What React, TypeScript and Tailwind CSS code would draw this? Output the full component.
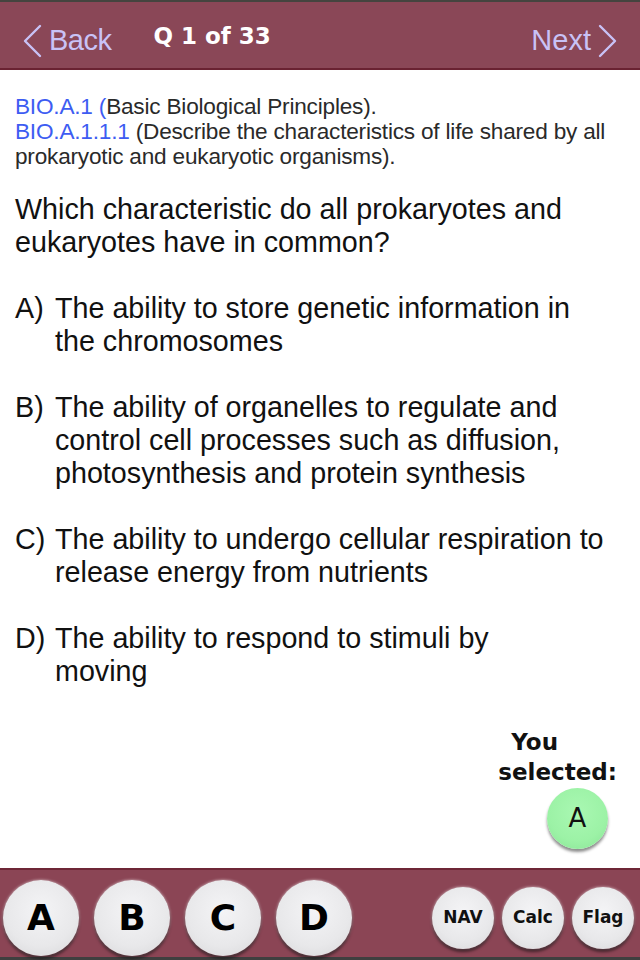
const options = [
  { key: "A", lines: ["The ability to store genetic information in", "the chromosomes"] },
  {
    key: "B",
    lines: [
      "The ability of organelles to regulate and",
      "control cell processes such as diffusion,",
      "photosynthesis and protein synthesis",
    ],
  },
  { key: "C", lines: ["The ability to undergo cellular respiration to", "release energy from nutrients"] },
  { key: "D", lines: ["The ability to respond to stimuli by", "moving"] },
];

function Chevron({ dir }: { dir: "left" | "right" }) {
  return (
    <svg width="20" height="34" viewBox="0 0 20 34" className="shrink-0">
      <polyline
        points={dir === "left" ? "18,2 3,17 18,32" : "2,2 17,17 2,32"}
        fill="none"
        stroke="#c9c2f6"
        strokeWidth="2.4"
        strokeLinecap="round"
        strokeLinejoin="round"
      />
    </svg>
  );
}

function RoundButton({ label, big }: { label: string; big?: boolean }) {
  return (
    <button
      className={
        big
          ? "w-[76px] h-[76px] rounded-full flex items-center justify-center text-[36px] font-bold text-black bg-[radial-gradient(circle_at_50%_40%,#f4f4f6_0%,#e8e8ea_60%,#d6d6d8_100%)] shadow-[0_3px_3px_rgba(0,0,0,0.55),0_0_3px_rgba(255,255,255,0.7)]"
          : "w-[62px] h-[62px] rounded-full flex items-center justify-center text-[17px] font-bold text-[#111] bg-[radial-gradient(circle_at_50%_40%,#f4f4f6_0%,#e8e8ea_60%,#d6d6d8_100%)] shadow-[0_3px_3px_rgba(0,0,0,0.55),0_0_3px_rgba(255,255,255,0.7)]"
      }
      style={{ fontFamily: '"DejaVu Sans", sans-serif' }}
    >
      {label}
    </button>
  );
}

export default function App() {
  return (
    <div className="w-[640px] h-[960px] flex flex-col bg-white overflow-hidden">
      {/* header */}
      <header
        className="h-[70px] shrink-0 flex items-center border-t-2 border-t-[#45443f] border-b-2 border-b-[#6a2232] bg-[#8a4757] px-[22px] pt-[12px]"
        style={{ fontFamily: '"Liberation Sans", Arial, sans-serif' }}
      >
        <div className="flex items-center gap-[7px] text-[#c9c2f6] text-[29px] tracking-[-0.5px]">
          <Chevron dir="left" />
          <span>Back</span>
        </div>
        <div
          className="ml-[42px] text-white text-[23px] font-bold -mt-[9px]"
          style={{ fontFamily: '"DejaVu Sans", sans-serif' }}
        >
          Q 1 of 33
        </div>
        <div className="flex-1" />
        <div className="flex items-center gap-[7px] text-[#c9c2f6] text-[29px]">
          <span>Next</span>
          <Chevron dir="right" />
        </div>
      </header>

      {/* question body */}
      <main
        className="flex-1 flex flex-col px-[15px] pt-[24px]"
        style={{ fontFamily: '"Liberation Sans", Arial, sans-serif' }}
      >
        <p className="text-[22.6px] leading-[25px] text-[#2a2a2a] whitespace-nowrap tracking-[-0.2px]">
          <span className="text-[#3d5cf2]">BIO.A.1 (</span>Basic Biological Principles).
          <br />
          <span className="text-[#3d5cf2]">BIO.A.1.1.1</span> (Describe the characteristics of life shared by all
          <br />
          prokaryotic and eukaryotic organisms).
        </p>

        <p className="mt-[24px] text-[28.7px] leading-[33px] text-[#111] whitespace-nowrap">
          Which characteristic do all prokaryotes and
          <br />
          eukaryotes have in common?
        </p>

        <div className="mt-[33px] flex flex-col gap-[33px]">
          {options.map((o) => (
            <div key={o.key} className="flex text-[28.7px] leading-[33px] text-[#111] whitespace-nowrap">
              <span className="w-[40px] shrink-0">{o.key})</span>
              <span>
                {o.lines.map((l, i) => (
                  <span key={i} className="block">
                    {l}
                  </span>
                ))}
              </span>
            </div>
          ))}
        </div>

        <div className="mt-[39px] self-end flex flex-col items-end pr-[8px]">
          <div
            className="text-center text-[23px] leading-[30px] font-bold text-[#111]"
            style={{ fontFamily: '"DejaVu Sans", sans-serif' }}
          >
            <div className="pr-[46px]">You</div>
            <div>selected:</div>
          </div>
          <div
            className="mt-[1px] mr-[9px] w-[61px] h-[61px] rounded-full flex items-center justify-center text-[26px] text-[#111] bg-[radial-gradient(circle_at_50%_40%,#a9f8b2_0%,#9cf2a6_60%,#88e395_100%)] shadow-[0_3px_3px_rgba(0,0,0,0.45)]"
            style={{ fontFamily: '"DejaVu Sans", sans-serif' }}
          >
            A
          </div>
        </div>
      </main>

      {/* answer bar */}
      <footer className="h-[92px] shrink-0 flex items-start border-t-2 border-t-[#6e2636] border-b-[3px] border-b-[#3f3f3f] bg-[#8b4555] pt-[10px] pl-[3px] pr-[6px]">
        <div className="h-[76px] flex items-center gap-[15px]">
          {["A", "B", "C", "D"].map((l) => (
            <RoundButton key={l} label={l} big />
          ))}
        </div>
        <div className="flex-1" />
        <div className="h-[76px] flex items-center gap-[8px]">
          <RoundButton label="NAV" />
          <RoundButton label="Calc" />
          <RoundButton label="Flag" />
        </div>
      </footer>
    </div>
  );
}
